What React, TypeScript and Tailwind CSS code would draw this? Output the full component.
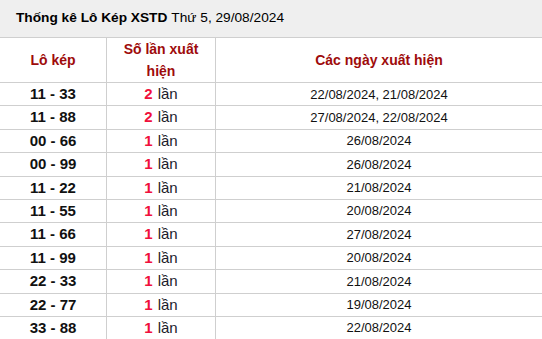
const rows = [
  { pair: '11 - 33', count: 2, dates: '22/08/2024, 21/08/2024' },
  { pair: '11 - 88', count: 2, dates: '27/08/2024, 22/08/2024' },
  { pair: '00 - 66', count: 1, dates: '26/08/2024' },
  { pair: '00 - 99', count: 1, dates: '26/08/2024' },
  { pair: '11 - 22', count: 1, dates: '21/08/2024' },
  { pair: '11 - 55', count: 1, dates: '20/08/2024' },
  { pair: '11 - 66', count: 1, dates: '27/08/2024' },
  { pair: '11 - 99', count: 1, dates: '20/08/2024' },
  { pair: '22 - 33', count: 1, dates: '21/08/2024' },
  { pair: '22 - 77', count: 1, dates: '19/08/2024' },
  { pair: '33 - 88', count: 1, dates: '22/08/2024' },
]

export default function App() {
  return (
    <div className="w-[542px] h-[339px] overflow-hidden bg-white font-['Liberation_Sans',Arial,sans-serif] text-black">
      {/* Title */}
      <div className="h-[38px] bg-[#efefef] border-b border-[#cfcfcf] flex items-center pl-[16px] text-[13.7px]">
        <span className="font-bold">Thống kê Lô Kép XSTD</span>
        <span className="ml-[4px]">Thứ 5, 29/08/2024</span>
      </div>

      {/* Header row */}
      <div className="grid grid-cols-[107px_109px_1fr] h-[45px] border-b border-[#cfcfcf] text-[14px] font-bold text-[#9e0b0b]">
        <div className="flex items-center justify-center border-r border-[#cfcfcf]">Lô kép</div>
        <div className="flex items-center justify-center text-center leading-[22px] border-r border-[#cfcfcf] px-[8px]">
          Số lần xuất hiện
        </div>
        <div className="flex items-center justify-center">Các ngày xuất hiện</div>
      </div>

      {/* Data rows */}
      {rows.map((r) => (
        <div
          key={r.pair}
          className="grid grid-cols-[107px_109px_1fr] h-[23.4px] border-b border-[#cfcfcf]"
        >
          <div className="flex items-center justify-center border-r border-[#cfcfcf] text-[15px] font-bold text-[#111]">
            {r.pair}
          </div>
          <div className="flex items-center justify-center border-r border-[#cfcfcf] text-[15px]">
            <span className="font-bold text-[#f0103c]">{r.count}</span>
            <span className="ml-[5px] text-[#1b1b2b]">lần</span>
          </div>
          <div className="flex items-center justify-center text-[13px] text-[#111]">{r.dates}</div>
        </div>
      ))}
    </div>
  )
}
